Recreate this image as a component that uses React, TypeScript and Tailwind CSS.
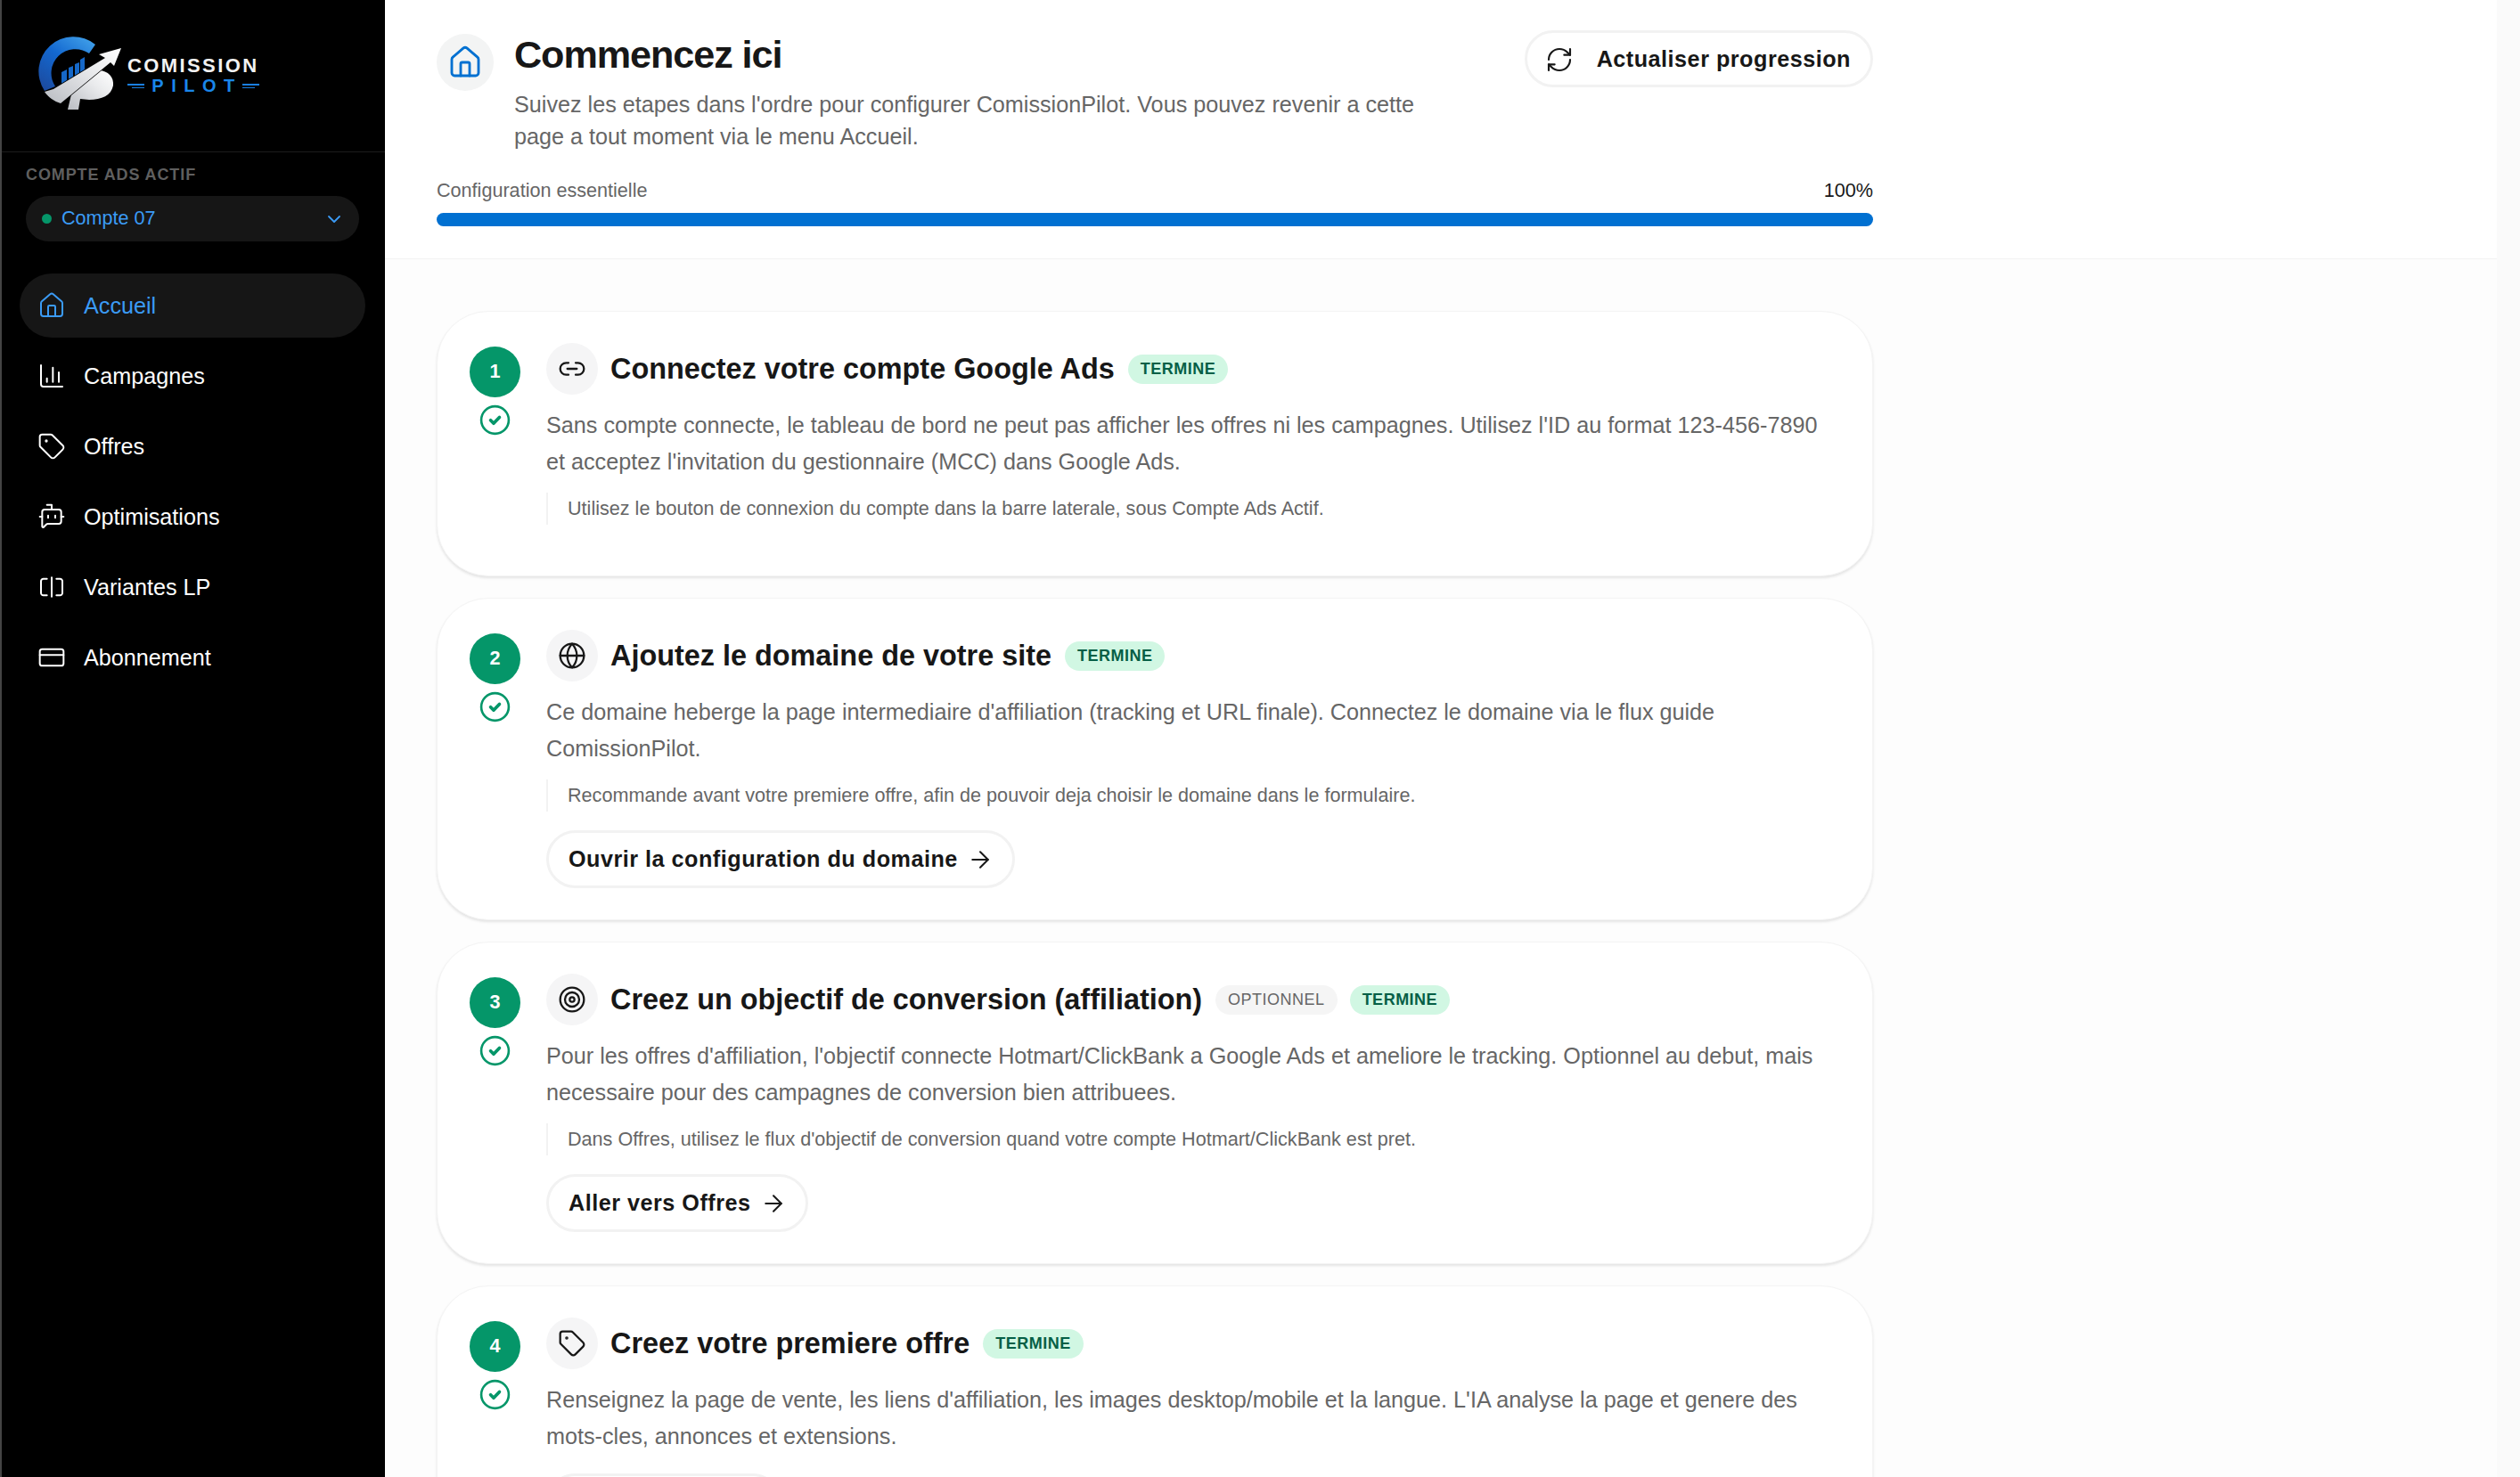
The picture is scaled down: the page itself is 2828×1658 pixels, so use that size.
import React from 'react';
import {
  ArrowRight,
  BotMessageSquare,
  ChartColumn,
  ChevronDown,
  CreditCard,
  Globe,
  House,
  Link2,
  RefreshCw,
  SquareSplitHorizontal,
  Tag,
  Target,
} from 'lucide-react';

const Logo = () => (
  <div className="flex items-center h-[170px] pl-[38px]">
    <svg viewBox="40 40 105 90" className="w-[105px] h-[90px] shrink-0 -mt-[2px]">
      <defs>
        <linearGradient id="arc" x1="0.85" y1="0" x2="0.1" y2="1">
          <stop offset="0" stopColor="#3f9ee8" />
          <stop offset="0.45" stopColor="#1368d0" />
          <stop offset="1" stopColor="#1c4a9e" />
        </linearGradient>
        <linearGradient id="chrome" x1="0" y1="1" x2="1" y2="0">
          <stop offset="0" stopColor="#b9bcc2" />
          <stop offset="0.6" stopColor="#e9eaec" />
          <stop offset="1" stopColor="#ffffff" />
        </linearGradient>
      </defs>
      <path d="M107 51 A39 39 0 0 0 50 103 L62 98 A27 27 0 0 1 100 61 Z" fill="url(#arc)" />
      <path d="M69 82 L75 79 V93 L69 96 Z M77 77 L82 75 V90 L77 92 Z M84 73 L89 71 V86 L84 88 Z M90 68 L95 65 V80 L90 84 Z" fill="#1668c8" />
      <path d="M110 80 C122 80 128 88 127 97 C125 108 114 113 100 113 L90 112 L88 124 L76 124 L80 107 L100 90 Z" fill="url(#chrome)" />
      <path
        d="M136 55 L111 62 L118 66 L60 101 L50 104 C54 110 61 115 68 117 L124 71 L128 75 Z"
        fill="url(#chrome)"
        stroke="#000000"
        strokeWidth="1.5"
        paintOrder="stroke"
      />
    </svg>
    <div className="flex flex-col items-start -ml-[2px] -mt-[1px]">
      <span className="text-[22px] leading-[22px] font-bold tracking-[2.4px] text-[#f2f2f2]">COMISSION</span>
      <div className="flex items-center mt-[1px] w-[148px]">
        <span className="flex flex-col gap-[2px] w-[21px]">
          <span className="h-[2px] bg-[#1a7fe0]" />
          <span className="h-px ml-[5px] bg-[#1a7fe0]" />
        </span>
        <span className="flex-1 text-center text-[20px] leading-[20px] font-bold tracking-[8.5px] pl-[8px] text-[#1a86ea]">
          PILOT
        </span>
        <span className="flex flex-col gap-[2px] w-[21px]">
          <span className="h-[2px] bg-[#1a7fe0]" />
          <span className="h-px mr-[5px] bg-[#1a7fe0]" />
        </span>
      </div>
    </div>
  </div>
);

const navItems = [
  { label: 'Accueil', icon: House, active: true },
  { label: 'Campagnes', icon: ChartColumn },
  { label: 'Offres', icon: Tag },
  { label: 'Optimisations', icon: BotMessageSquare },
  { label: 'Variantes LP', icon: SquareSplitHorizontal },
  { label: 'Abonnement', icon: CreditCard },
];

const Sidebar = () => (
  <aside className="w-[432px] shrink-0 h-full bg-black border-l-2 border-[#444444] flex flex-col">
    <div className="border-b border-[#1c1c1c]">
      <Logo />
    </div>
    <div className="pl-[27px] pr-[29px] pt-[15px]">
      <div className="text-[18px] leading-[20px] font-bold tracking-[0.9px] text-[#5f5f5f]">COMPTE ADS ACTIF</div>
      <div className="mt-[14px] h-[51px] rounded-full bg-[#161616] flex items-center pl-[18px] pr-[16px]">
        <span className="w-[11px] h-[11px] rounded-full bg-[#059669]" />
        <span className="ml-[11px] text-[21.6px] text-[#3b9bf5]">Compte 07</span>
        <ChevronDown className="ml-auto text-[#3b9bf5]" size={24} strokeWidth={1.8} />
      </div>
    </div>
    <nav className="mt-[36px] pl-[20px] pr-[22px] flex flex-col gap-[7px]">
      {navItems.map(({ label, icon: Icon, active }) => (
        <div
          key={label}
          className={`h-[72px] rounded-full flex items-center pl-[20px] gap-[20px] text-[25.2px] ${
            active ? 'bg-[#161616] text-[#3b9bf5]' : 'text-white'
          }`}
        >
          <Icon size={32} strokeWidth={1.5} />
          <span className="pt-[1px]">{label}</span>
        </div>
      ))}
    </nav>
  </aside>
);

const Badge = ({ optional }: { optional?: boolean }) => (
  <span
    className={`h-[33px] px-[14px] rounded-full flex items-center text-[18px] tracking-[0.5px] whitespace-nowrap ${
      optional ? 'bg-[#f5f5f5] text-[#666666]' : 'bg-[#d1f7e3] text-[#065f46] font-bold'
    }`}
  >
    {optional ? 'OPTIONNEL' : 'TERMINE'}
  </span>
);

const DoneIcon = () => (
  <svg viewBox="0 0 24 24" fill="none" stroke="#059669" strokeLinecap="round" strokeLinejoin="round" className="w-[37px] h-[37px] mt-[7px]">
    <circle cx="12" cy="12" r="10" strokeWidth="1.7" />
    <path d="M8.8 12.2l2.2 2.2 4.2-4.4" strokeWidth="2.4" />
  </svg>
);

const ActionButton = ({ label }: { label: string }) => (
  <button className="h-[65px] pl-[22px] pr-[21px] pt-[1px] rounded-full border-[3px] border-[#f2f2f2] bg-white flex items-center gap-[10px] text-[25.2px] font-bold tracking-[0.5px] text-[#171717]">
    {label}
    <ArrowRight size={30} strokeWidth={1.6} />
  </button>
);

interface StepProps {
  n: number;
  icon: React.ElementType;
  title: string;
  optional?: boolean;
  desc: React.ReactNode;
  note?: string;
  action?: React.ReactNode;
}

const StepCard: React.FC<StepProps> = ({ n, icon: Icon, title, optional, desc, note, action }) => (
  <div className="shrink-0 rounded-[58px] bg-white border border-[#f4f4f4] shadow-[0_2px_3px_rgba(0,0,0,0.10)] pl-[36px] pr-[36px] pt-[35px] pb-[35px] flex gap-[29px]">
    <div className="w-[57px] shrink-0 flex flex-col items-center pt-[4px]">
      <div className="w-[57px] h-[57px] rounded-full bg-[#059669] flex items-center justify-center text-white font-bold text-[21.6px]">
        {n}
      </div>
      <DoneIcon />
    </div>
    <div className="flex-1 min-w-0">
      <div className="flex items-center">
        <div className="w-[58px] h-[58px] rounded-full bg-[#f5f5f6] flex items-center justify-center text-[#171717]">
          <Icon size={32} strokeWidth={1.7} />
        </div>
        <h3 className="ml-[14px] text-[32.4px] font-bold text-[#171717] whitespace-nowrap">{title}</h3>
        <div className="ml-[15px] flex gap-[14px]">
          {optional && <Badge optional />}
          <Badge />
        </div>
      </div>
      <p className="mt-[14px] text-[25.2px] leading-[41px] text-[#666666]">{desc}</p>
      {note && (
        <div className="mt-[14px] h-[36px] border-l-2 border-[#f2f2f2] pl-[22px] flex items-center text-[21.6px] text-[#666666]">
          {note}
        </div>
      )}
      <div className="mt-[21px] min-h-px">{action}</div>
    </div>
  </div>
);

const App = () => (
  <div className="w-full h-screen flex overflow-hidden bg-[#fdfdfd] font-['Liberation_Sans',Arial,sans-serif]">
    <Sidebar />
    <main className="flex-1 min-w-0 h-full flex flex-col">
      <header className="shrink-0 bg-white border-b border-[#f2f2f2] pl-[58px] pr-[700px] pt-[34px] pb-[36px]">
        <div className="flex items-start">
          <div className="mt-[4px] w-[64px] h-[64px] rounded-full bg-[#f3f4f4] flex items-center justify-center text-[#0070d1] shrink-0">
            <House size={40} strokeWidth={1.7} />
          </div>
          <div className="ml-[23px] flex-1">
            <h1 className="text-[43.2px] leading-[54px] font-bold tracking-tight text-[#171717]">Commencez ici</h1>
            <p className="mt-[11px] max-w-[1037px] text-[25.2px] leading-[36px] text-[#666666]">
              Suivez les etapes dans l'ordre pour configurer ComissionPilot. Vous pouvez revenir a cette page a tout
              moment via le menu Accueil.
            </p>
          </div>
          <button className="h-[64px] pl-[20px] pr-[22px] pt-[1px] rounded-full border-[3px] border-[#f2f2f2] bg-white flex items-center gap-[26px] text-[25.2px] font-bold tracking-[0.5px] text-[#171717] whitespace-nowrap">
            <RefreshCw size={32} strokeWidth={1.6} />
            Actualiser progression
          </button>
        </div>
        <div className="mt-[26px] flex justify-between text-[21.6px] leading-[34px]">
          <span className="text-[#666666]">Configuration essentielle</span>
          <span className="text-[#171717]">100%</span>
        </div>
        <div className="mt-[8px] h-[15px] rounded-full bg-[#0070d1]" />
      </header>
      <div className="flex-1 min-h-0 overflow-hidden pl-[58px] pr-[700px] pt-[58px] flex flex-col gap-[24px]">
        <StepCard
          n={1}
          icon={Link2}
          title="Connectez votre compte Google Ads"
          desc="Sans compte connecte, le tableau de bord ne peut pas afficher les offres ni les campagnes. Utilisez l'ID au format 123-456-7890 et acceptez l'invitation du gestionnaire (MCC) dans Google Ads."
          note="Utilisez le bouton de connexion du compte dans la barre laterale, sous Compte Ads Actif."
        />
        <StepCard
          n={2}
          icon={Globe}
          title="Ajoutez le domaine de votre site"
          desc="Ce domaine heberge la page intermediaire d'affiliation (tracking et URL finale). Connectez le domaine via le flux guide ComissionPilot."
          note="Recommande avant votre premiere offre, afin de pouvoir deja choisir le domaine dans le formulaire."
          action={<ActionButton label="Ouvrir la configuration du domaine" />}
        />
        <StepCard
          n={3}
          icon={Target}
          title="Creez un objectif de conversion (affiliation)"
          optional
          desc="Pour les offres d'affiliation, l'objectif connecte Hotmart/ClickBank a Google Ads et ameliore le tracking. Optionnel au debut, mais necessaire pour des campagnes de conversion bien attribuees."
          note="Dans Offres, utilisez le flux d'objectif de conversion quand votre compte Hotmart/ClickBank est pret."
          action={<ActionButton label="Aller vers Offres" />}
        />
        <StepCard
          n={4}
          icon={Tag}
          title="Creez votre premiere offre"
          desc="Renseignez la page de vente, les liens d'affiliation, les images desktop/mobile et la langue. L'IA analyse la page et genere des mots-cles, annonces et extensions."
          action={<div className="w-[264px] h-[65px] rounded-full border-[3px] border-[#f2f2f2] bg-white" />}
        />
      </div>
    </main>
    <div className="w-[26px] shrink-0 h-full bg-[#fafafa]" />
  </div>
);

export default App;
